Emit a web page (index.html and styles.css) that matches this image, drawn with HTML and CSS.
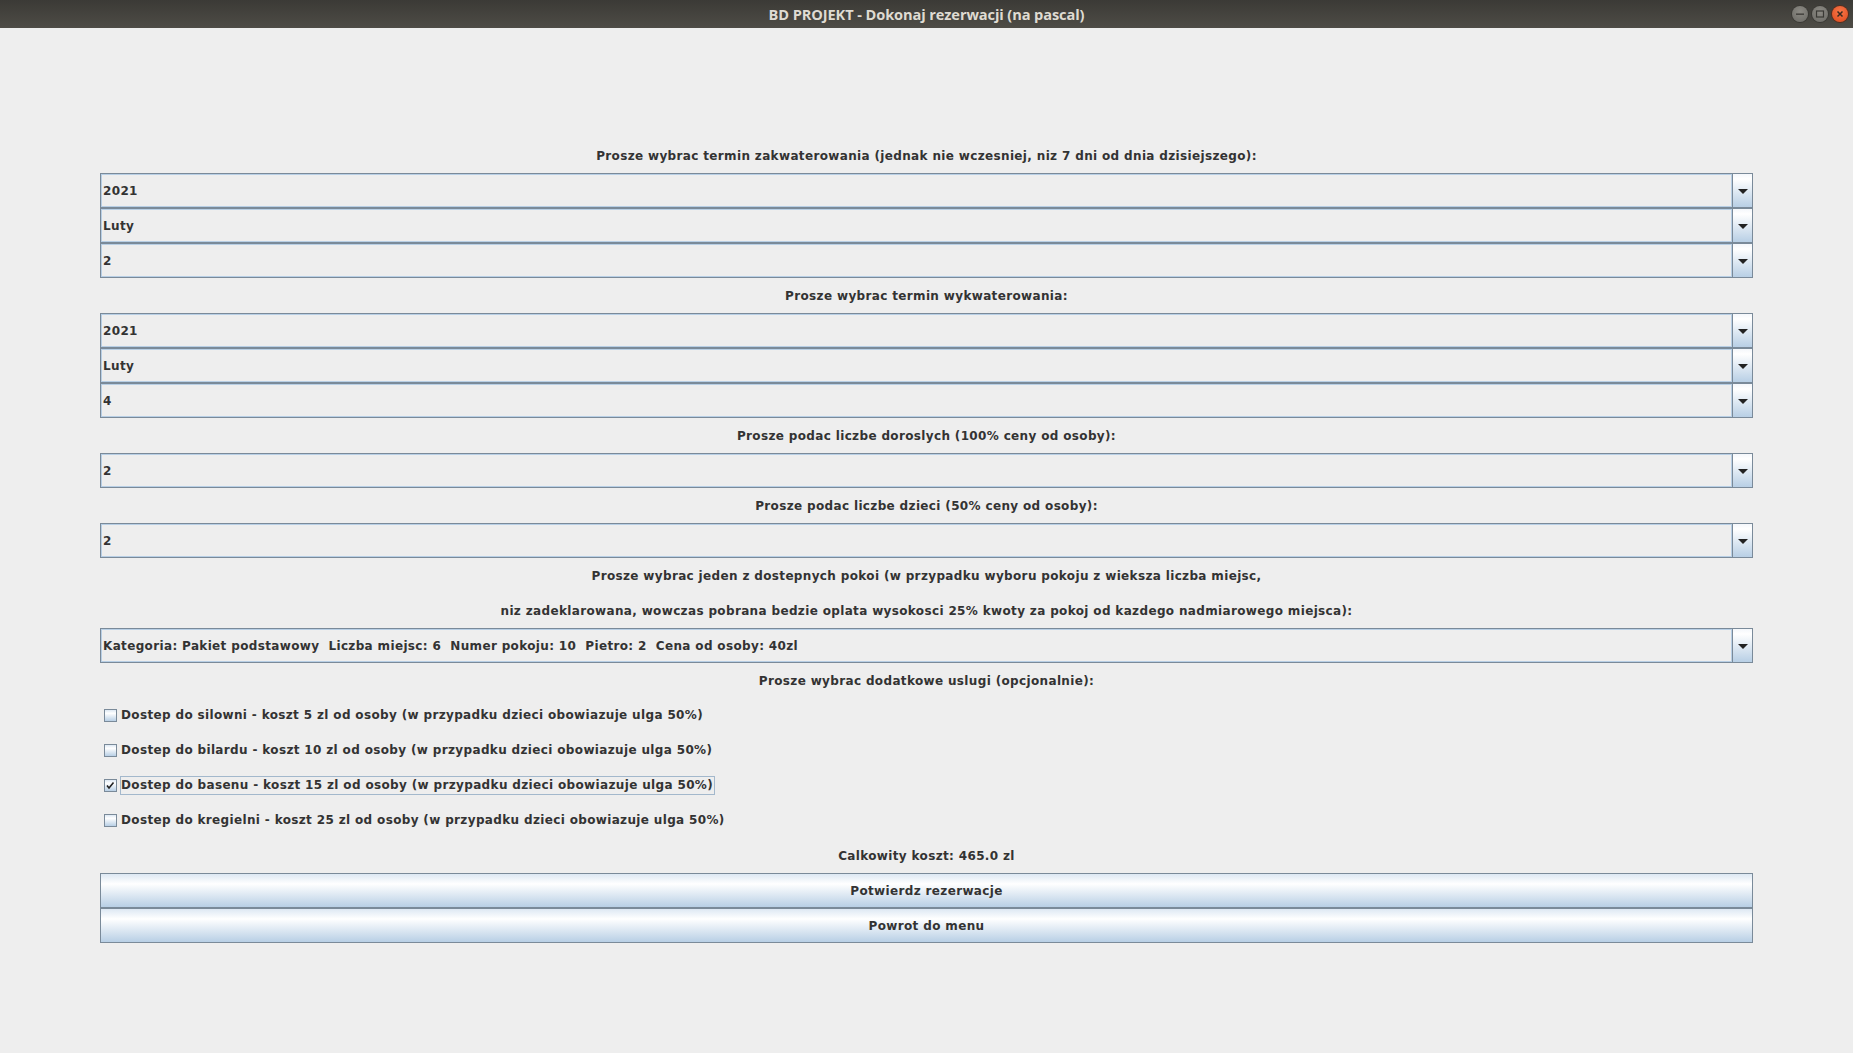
FILE: index.html
```html
<!DOCTYPE html>
<html lang="pl">
<head>
<meta charset="utf-8">
<title>BD PROJEKT - Dokonaj rezerwacji (na pascal)</title>
<link rel="stylesheet" href="styles.css">
</head>
<body>
<div class="titlebar">
  <span class="title">BD PROJEKT - Dokonaj rezerwacji (na pascal)</span>
  <div class="wbtns">
    <span class="wbtn min"><svg width="16" height="16" viewBox="0 0 16 16"><rect x="4" y="7.5" width="8" height="1.3" fill="#3a3935"/></svg></span>
    <span class="wbtn max"><svg width="16" height="16" viewBox="0 0 16 16"><rect x="4.5" y="5" width="7" height="6" fill="none" stroke="#3a3935" stroke-width="1.2"/></svg></span>
    <span class="wbtn close"><svg width="16" height="16" viewBox="0 0 16 16"><path d="M5.5 5.5 L10.5 10.5 M10.5 5.5 L5.5 10.5" stroke="#3a2a20" stroke-width="1.5"/></svg></span>
  </div>
</div>
<main class="content">
  <div class="form">
    <div class="label">Prosze wybrac termin zakwaterowania (jednak nie wczesniej, niz 7 dni od dnia dzisiejszego):</div>
    <div class="combo"><span class="val">2021</span><span class="arrow"></span></div>
    <div class="combo"><span class="val">Luty</span><span class="arrow"></span></div>
    <div class="combo"><span class="val">2</span><span class="arrow"></span></div>
    <div class="label">Prosze wybrac termin wykwaterowania:</div>
    <div class="combo"><span class="val">2021</span><span class="arrow"></span></div>
    <div class="combo"><span class="val">Luty</span><span class="arrow"></span></div>
    <div class="combo"><span class="val">4</span><span class="arrow"></span></div>
    <div class="label">Prosze podac liczbe doroslych (100% ceny od osoby):</div>
    <div class="combo"><span class="val">2</span><span class="arrow"></span></div>
    <div class="label">Prosze podac liczbe dzieci (50% ceny od osoby):</div>
    <div class="combo"><span class="val">2</span><span class="arrow"></span></div>
    <div class="label">Prosze wybrac jeden z dostepnych pokoi (w przypadku wyboru pokoju z wieksza liczba miejsc,</div>
    <div class="label">niz zadeklarowana, wowczas pobrana bedzie oplata wysokosci 25% kwoty za pokoj od kazdego nadmiarowego miejsca):</div>
    <div class="combo"><span class="val">Kategoria: Pakiet podstawowy &nbsp;Liczba miejsc: 6 &nbsp;Numer pokoju: 10 &nbsp;Pietro: 2 &nbsp;Cena od osoby: 40zl</span><span class="arrow"></span></div>
    <div class="label">Prosze wybrac dodatkowe uslugi (opcjonalnie):</div>
    <div class="check"><span class="box"></span><span class="ctext">Dostep do silowni - koszt 5 zl od osoby (w przypadku dzieci obowiazuje ulga 50%)</span></div>
    <div class="check"><span class="box"></span><span class="ctext">Dostep do bilardu - koszt 10 zl od osoby (w przypadku dzieci obowiazuje ulga 50%)</span></div>
    <div class="check"><span class="box checked"><svg width="11" height="11" viewBox="0 0 11 11"><path d="M2 5.5 L4 8 L8.5 2.5" fill="none" stroke="#222" stroke-width="1.6"/></svg></span><span class="ctext focus">Dostep do basenu - koszt 15 zl od osoby (w przypadku dzieci obowiazuje ulga 50%)</span></div>
    <div class="check"><span class="box"></span><span class="ctext">Dostep do kregielni - koszt 25 zl od osoby (w przypadku dzieci obowiazuje ulga 50%)</span></div>
    <div class="label">Calkowity koszt: 465.0 zl</div>
    <div class="btn">Potwierdz rezerwacje</div>
    <div class="btn">Powrot do menu</div>
  </div>
</main>
</body>
</html>
```
FILE: styles.css
```css
html, body {
  margin: 0;
  padding: 0;
  background: #eeeeee;
  width: 1853px;
  height: 1053px;
  overflow: hidden;
}
.titlebar {
  height: 28px;
  background: linear-gradient(#3b3a36, #4e4c46);
  position: relative;
  display: flex;
  align-items: center;
  justify-content: center;
}
.title {
  font-family: "Open Sans", "DejaVu Sans", sans-serif;
  font-weight: 700;
  font-size: 14.6px;
  color: #dfdbd2;
  letter-spacing: -0.1px;
}
.wbtns {
  position: absolute;
  right: 5px;
  top: 6px;
  display: flex;
  gap: 4px;
}
.wbtn {
  width: 16px;
  height: 16px;
  border-radius: 50%;
  display: block;
}
.wbtn svg { display: block; }
.wbtn.min, .wbtn.max {
  background: radial-gradient(circle at 50% 35%, #8c8a84, #6a6964);
  box-shadow: 0 0 0 1px #3a3935;
}
.wbtn.close {
  background: radial-gradient(circle at 50% 35%, #f7784a, #e0471a);
  box-shadow: 0 0 0 1px #5a2d1c;
}
.content {
  height: 1025px;
  padding: 0 100px;
  display: flex;
  flex-direction: column;
  justify-content: center;
}
.form {
  display: grid;
  grid-auto-rows: 35px;
  font-family: "DejaVu Sans", sans-serif;
  font-weight: 700;
  font-size: 12px;
  letter-spacing: 0.35px;
  color: #333333;
}
.label {
  display: flex;
  align-items: center;
  justify-content: center;
  white-space: pre;
}
.combo {
  display: flex;
  border: 1px solid #7a8a99;
  background: #eeeeee;
}
.val {
  flex: 1;
  display: flex;
  align-items: center;
  padding-left: 1px;
  border: 1px solid #b8cfe5;
  white-space: pre;
}
.arrow {
  width: 19px;
  border-left: 1px solid #7a8a99;
  background: linear-gradient(#f4f7fb 0%, #ffffff 15%, #b8cfe5 100%);
  position: relative;
}
.arrow::after {
  content: "";
  position: absolute;
  left: 5px;
  top: 15px;
  border-left: 5px solid transparent;
  border-right: 5px solid transparent;
  border-top: 5px solid #222222;
}
.check {
  display: flex;
  align-items: center;
  padding-left: 4px;
}
.box {
  width: 11px;
  height: 11px;
  border: 1px solid #7a8a99;
  background: linear-gradient(#dde8f3 0%, #ffffff 30%, #b8cfe5 100%);
  margin-right: 3px;
  display: block;
  position: relative;
}
.box svg { position: absolute; left: 0; top: 0; }
.ctext {
  border: 1px solid transparent;
  padding: 0 1px 1px 0;
  line-height: 16px;
}
.ctext.focus { border-color: #a3b8cc; }
.btn {
  border: 1px solid #7a8a99;
  background: linear-gradient(#dde8f3 0%, #ffffff 30%, #b8cfe5 100%);
  display: flex;
  align-items: center;
  justify-content: center;
}
```
